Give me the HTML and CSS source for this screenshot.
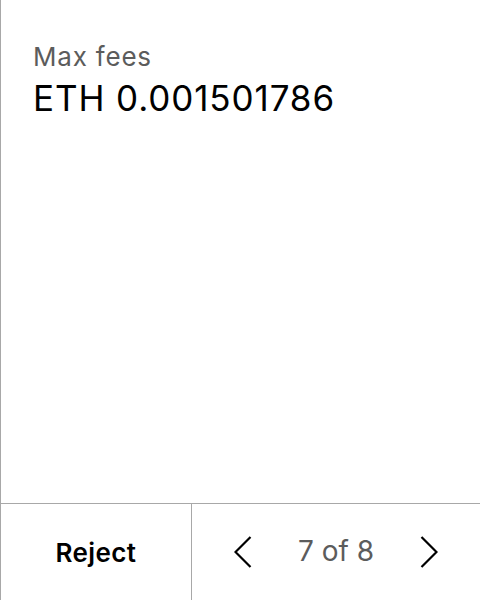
FILE: index.html
```html
<!DOCTYPE html>
<html>
<head>
<meta charset="utf-8">
<link rel="stylesheet" href="styles.css">
</head>
<body>
<div class="screen">
  <main class="content">
    <div class="label">Max fees</div>
    <div class="value">ETH 0.001501786</div>
  </main>
  <footer class="footer">
    <button class="reject">Reject</button>
    <div class="pager">
      <svg class="chev" width="18" height="32" viewBox="0 0 18 32"><path d="M16.5 1 L1.5 16 L16.5 31" fill="none" stroke="#000" stroke-width="2.2"/></svg>
      <span class="count">7 of 8</span>
      <svg class="chev" width="18" height="32" viewBox="0 0 18 32"><path d="M1.5 1 L16.5 16 L1.5 31" fill="none" stroke="#000" stroke-width="2.2"/></svg>
    </div>
  </footer>
</div>
</body>
</html>
```
FILE: styles.css
```css
html, body {
  margin: 0;
  padding: 0;
  background: #fff;
}
body {
  font-family: Inter, "Noto Sans", sans-serif;
}
.screen {
  width: 480px;
  height: 600px;
  box-sizing: border-box;
  border-left: 1px solid #a8a8a8;
  display: flex;
  flex-direction: column;
}
.content {
  flex: 1;
  padding: 40px 0 0 32px;
}
.label {
  font-size: 26px;
  line-height: 33px;
  letter-spacing: 0.8px;
  color: #5c5c5c;
}
.value {
  font-size: 35px;
  line-height: 40px;
  letter-spacing: 0.9px;
  margin-top: 5px;
  color: #000;
}
.footer {
  height: 96px;
  border-top: 1px solid #a8a8a8;
  display: flex;
}
.reject {
  width: 191px;
  border: none;
  border-right: 1px solid #a8a8a8;
  background: #fff;
  font-family: Inter, "Noto Sans", sans-serif;
  font-size: 26px;
  font-weight: 600;
  letter-spacing: 0.4px;
  color: #000;
  padding: 0;
}
.pager {
  flex: 1;
  display: flex;
  align-items: center;
  justify-content: space-between;
  padding: 0 42px 0 42px;
}
.count {
  font-size: 28px;
  color: #5c5c5c;
  margin-bottom: 3px;
}
.chev {
  display: block;
}
```
